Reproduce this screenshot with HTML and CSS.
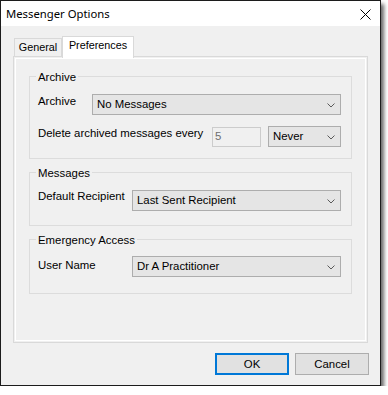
FILE: index.html
```html
<!DOCTYPE html>
<html>
<head>
<meta charset="utf-8">
<link rel="stylesheet" href="styles.css">
</head>
<body>
<div class="window">
  <div class="titlebar">
    <span class="title">Messenger Options</span>
    <svg class="close" width="11" height="11" viewBox="0 0 11 11"><path d="M0.5 0.5 L10.5 10.5 M10.5 0.5 L0.5 10.5" stroke="#000" stroke-width="1" fill="none"/></svg>
  </div>
  <div class="body">
    <div class="tabs">
      <div class="tab">General</div>
      <div class="tab active">Preferences</div>
    </div>
    <div class="panel">
      <div class="page">
        <div class="group g-archive">
          <span class="caption">Archive</span>
          <div class="row">
            <span class="label l-archive">Archive</span>
            <div class="combo c-archive"><span>No Messages</span><svg class="chev" width="8" height="5" viewBox="0 0 8 5"><polyline points="0.5,0.5 4,4 7.5,0.5" fill="none" stroke="#5a5a5a" stroke-width="1"/></svg></div>
          </div>
          <div class="row r-delete">
            <span class="label l-delete">Delete archived messages every</span>
            <div class="textbox">5</div>
            <div class="combo c-never"><span>Never</span><svg class="chev" width="8" height="5" viewBox="0 0 8 5"><polyline points="0.5,0.5 4,4 7.5,0.5" fill="none" stroke="#5a5a5a" stroke-width="1"/></svg></div>
          </div>
        </div>
        <div class="group g-messages">
          <span class="caption">Messages</span>
          <div class="row">
            <span class="label l-recipient">Default Recipient</span>
            <div class="combo c-wide"><span>Last Sent Recipient</span><svg class="chev" width="8" height="5" viewBox="0 0 8 5"><polyline points="0.5,0.5 4,4 7.5,0.5" fill="none" stroke="#5a5a5a" stroke-width="1"/></svg></div>
          </div>
        </div>
        <div class="group g-emergency">
          <span class="caption">Emergency Access</span>
          <div class="row">
            <span class="label l-user">User Name</span>
            <div class="combo c-wide"><span>Dr A Practitioner</span><svg class="chev" width="8" height="5" viewBox="0 0 8 5"><polyline points="0.5,0.5 4,4 7.5,0.5" fill="none" stroke="#5a5a5a" stroke-width="1"/></svg></div>
          </div>
        </div>
      </div>
    </div>
    <div class="buttons">
      <button class="btn btn-default">OK</button>
      <button class="btn">Cancel</button>
    </div>
  </div>
</div>
</body>
</html>
```

FILE: styles.css
```css
html, body {
  margin: 0;
  padding: 0;
  background: #ffffff;
}

body {
  font-family: "Liberation Sans", Arial, sans-serif;
  font-size: 11.4px;
  line-height: 13px;
  color: #000;
}

.window {
  width: 381px;
  height: 386px;
  box-sizing: border-box;
  border: 1px solid #1c1c1c;
  background: #f0f0f0;
  box-shadow: 3px 4px 4px rgba(0, 0, 0, 0.6);
  display: flex;
  flex-direction: column;
}

.titlebar {
  height: 25px;
  flex: none;
  background: #ffffff;
  display: flex;
  align-items: center;
  justify-content: space-between;
  padding: 0 9px 0 5px;
}

.title {
  font-family: "Noto Sans", "Open Sans", sans-serif;
  font-size: 11.3px;
  line-height: 16px;
  color: #000;
}

.close {
  display: block;
  margin-top: 2px;
}

.body {
  flex: 1;
  padding: 10px 12px 0 12px;
  display: flex;
  flex-direction: column;
}

.tabs {
  display: flex;
  align-items: flex-end;
  height: 20px;
  padding-left: 1px;
  position: relative;
  z-index: 1;
  font-size: 10.8px;
}

.tab {
  box-sizing: border-box;
  height: 18px;
  width: 48px;
  border: 1px solid #d9d9d9;
  border-bottom: none;
  background: #f0f0f0;
  text-align: center;
  padding-top: 2px;
}

.tab.active {
  width: 72px;
  height: 22px;
  margin-bottom: -2px;
  background: #ffffff;
}

.panel {
  height: 287px;
  box-sizing: border-box;
  border: 1px solid #d9d9d9;
  padding: 1px;
  background: #f0f0f0;
}

.page {
  height: 100%;
  box-sizing: border-box;
  border: 1px solid #ffffff;
  padding: 17px 13px 0 13px;
  display: flex;
  flex-direction: column;
  gap: 13px;
}

.group {
  position: relative;
  box-sizing: border-box;
  border: 1px solid #dcdcdc;
  padding: 17px 0 0 8px;
}

.g-archive { height: 83px; }
.g-messages { height: 54px; }
.g-emergency { height: 55px; padding-top: 16px; }

.caption {
  position: absolute;
  top: -6px;
  left: 6px;
  padding: 0 2px;
  background: #f0f0f0;
}

.row {
  display: flex;
  align-items: flex-start;
}

.r-delete {
  margin-top: 11px;
}

.label {
  flex: none;
}

.l-archive { width: 54px; margin-top: 1px; }
.l-delete { width: 174px; margin-top: 1px; }
.l-recipient { width: 94px; margin-top: 0; }
.l-user { width: 94px; margin-top: 3px; }

.combo {
  box-sizing: border-box;
  height: 21px;
  border: 1px solid #adadad;
  background: #e5e5e5;
  padding: 3px 5px 0 4px;
  display: flex;
  justify-content: space-between;
  align-items: flex-start;
}

.chev {
  display: block;
  margin-top: 5px;
}

.c-archive { width: 249px; }
.c-never { width: 73px; margin-left: 7px; }
.c-wide { width: 209px; }

.textbox {
  box-sizing: border-box;
  width: 49px;
  height: 20px;
  margin-top: 1px;
  border: 1px solid #cccccc;
  background: #f0f0f0;
  color: #6d6d6d;
  padding: 2px 0 0 2px;
}

.buttons {
  display: flex;
  justify-content: flex-end;
  gap: 6px;
  margin-right: -1px;
  padding-top: 10px;
}

.btn {
  box-sizing: border-box;
  width: 74px;
  height: 22px;
  margin: 0;
  padding: 0;
  border: 1px solid #adadad;
  background: #e1e1e1;
  font-family: "Liberation Sans", Arial, sans-serif;
  font-size: 11.4px;
  line-height: 13px;
  color: #000;
}

.btn-default {
  border: 2px solid #0078d7;
}
```
